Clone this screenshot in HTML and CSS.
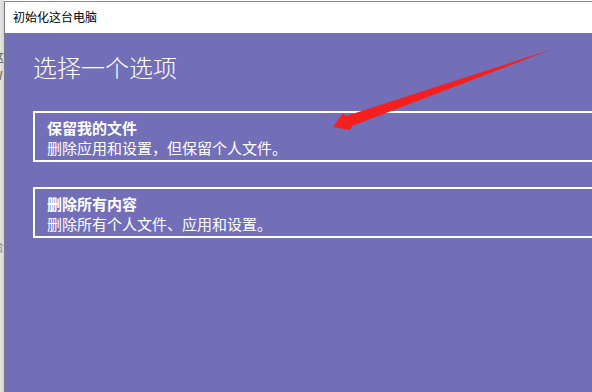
FILE: index.html
```html
<!DOCTYPE html>
<html lang="zh-CN">
<head>
<meta charset="utf-8">
<title>初始化这台电脑</title>
<link rel="stylesheet" href="styles.css">
</head>
<body>
<div class="bg-strip">
  <span class="bg-char c1">这</span>
  <span class="bg-char c2">W</span>
  <span class="bg-char c3">台</span>
</div>
<div class="window">
  <div class="titlebar">初始化这台电脑</div>
  <div class="content">
    <h1 class="heading">选择一个选项</h1>
    <div class="option">
      <div class="opt-title">保留我的文件</div>
      <div class="opt-desc">删除应用和设置，但保留个人文件。</div>
    </div>
    <div class="option">
      <div class="opt-title">删除所有内容</div>
      <div class="opt-desc">删除所有个人文件、应用和设置。</div>
    </div>
  </div>
</div>
<svg class="arrow" width="592" height="392" viewBox="0 0 592 392">
  <polygon points="333,127 343,113 346,116 553,49 352,126 350,130" fill="#f51f1f"/>
</svg>
</body>
</html>
```

FILE: styles.css
```css
html, body {
  margin: 0;
  padding: 0;
}
body {
  width: 592px;
  height: 392px;
  overflow: hidden;
  display: flex;
  background: #ffffff;
  font-family: "Noto Sans CJK SC", "Noto Sans", sans-serif;
  position: relative;
}
.bg-strip {
  width: 4px;
  flex: none;
  background: linear-gradient(to right, #e4e4e4, #d4d4d4);
  overflow: hidden;
  position: relative;
}
.bg-char {
  position: absolute;
  left: -8px;
  font-size: 12px;
  color: #555;
}
.c1 { top: 48px; }
.c2 { top: 66px; }
.c3 { top: 238px; color: #8a88c0; }
.window {
  flex: 1;
  display: flex;
  flex-direction: column;
  margin-top: 1px;
  border-top: 1px solid #8c8c8c;
  border-left: 1px solid #7a7a7a;
  min-width: 0;
}
.titlebar {
  height: 31px;
  flex: none;
  background: #ffffff;
  color: #000;
  font-size: 12px;
  padding-left: 8px;
  box-sizing: border-box;
  padding-top: 1px;
  line-height: 28px;
}
.content {
  flex: 1;
  background: #726fb8;
  padding: 18px 0 0 28px;
  overflow: hidden;
  color: #ffffff;
}
.heading {
  margin: 0 0 28px 0;
  font-size: 24px;
  font-weight: 300;
  line-height: 32px;
  letter-spacing: 0;
}
.option {
  border: 2px solid #ffffff;
  border-right: none;
  padding: 5px 0 2px 12px;
  margin-bottom: 25px;
  font-size: 15px;
  line-height: 20px;
}
.opt-title {
  font-weight: 700;
}
.opt-desc {
  font-weight: 400;
}
.arrow {
  position: absolute;
  left: 0;
  top: 0;
  pointer-events: none;
}
```
